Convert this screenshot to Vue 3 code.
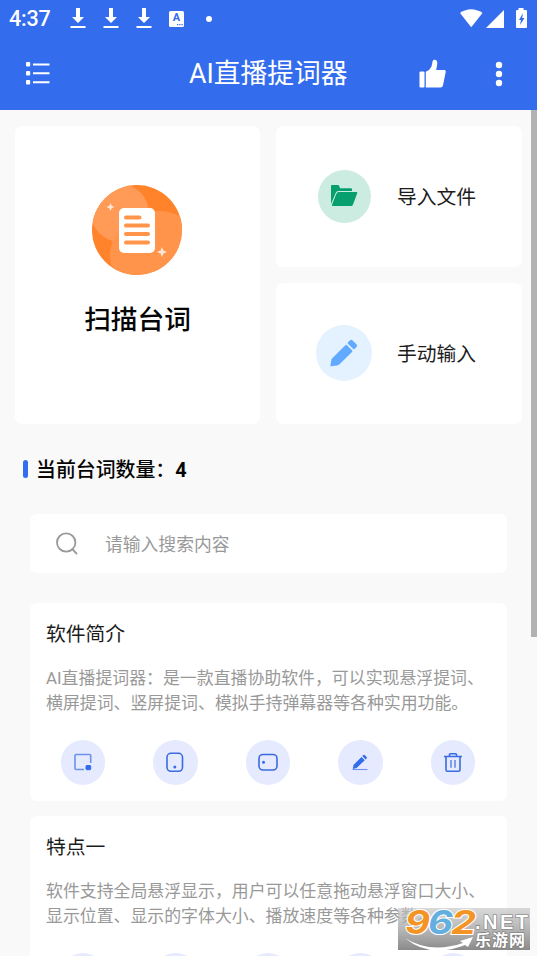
<script setup>
const scripts = [
  {
    title: '软件简介',
    lines: ['AI直播提词器：是一款直播协助软件，可以实现悬浮提词、', '横屏提词、竖屏提词、模拟手持弹幕器等各种实用功能。'],
  },
  {
    title: '特点一',
    lines: ['软件支持全局悬浮显示，用户可以任意拖动悬浮窗口大小、', '显示位置、显示的字体大小、播放速度等各种参数。'],
  },
]
const actions = ['float', 'portrait', 'landscape', 'edit', 'delete']
</script>

<template>
  <div class="screen">
    <header class="top">
      <div class="status">
        <span class="clock">4:37</span>
        <svg v-for="n in 3" :key="n" class="download" width="16" height="22" viewBox="0 0 16 22" fill="#fff">
          <path d="M6 0h4v9h4l-6 6-6-6h4zM.5 18h15v2H.5z" />
        </svg>
        <span class="badge"><span>A</span><svg width="6" height="2" viewBox="0 0 6 2" fill="#346cee"><path d="M0 0h1.300v1.300H0zM2.200 0h1.300v1.300H2.200zM4.400 0h1.300v1.300H4.400z" /></svg></span>
        <i class="dot"></i>
        <svg class="signals" width="69" height="22" viewBox="0 0 69 22" fill="#fff">
          <path d="M0 5Q11 -2.500 22.500 5L11.200 19.200z" />
          <path d="M44 2v18H26z" />
          <path fill-rule="evenodd" d="M58.500 0h5v2H66q1 0 1 1v16q0 1-1 1h-9q-1 0-1-1V3q0-1 1-1h1.500zM63 5l-4 7h2l-1 5 4.500-7h-2.300z" />
        </svg>
      </div>
      <div class="bar">
        <svg class="menu" width="24" height="24" viewBox="0 0 24 24" fill="#fff">
          <rect x="0" y="0" width="4.200" height="4.500" rx="1" /><rect x="0" y="9" width="4.200" height="4.500" rx="1" /><rect x="0" y="18" width="4.200" height="4.500" rx="1" />
          <path d="M7 1.500h16.500v2H7zM7 10.300h16.500v2H7zM7 19.200h16.500v2H7z" />
        </svg>
        <h1>AI直播提词器</h1>
        <svg class="thumb" width="28" height="30" viewBox="0 0 28 30" fill="#fff">
          <rect x="0.500" y="12.500" width="5" height="16" rx="1" />
          <path d="M6.800 12.800Q11 11 12.500 7.500L13.700 2Q14 .7 15.500.8q3 .2 2.800 4L17.200 11h8.300q1.500 0 1.300 1.600L24 26.300q-.4 2.200-2.500 2.200H6.800z" />
        </svg>
        <svg class="more" width="8" height="26" viewBox="0 0 8 26" fill="#fff"><circle cx="4" cy="4" r="3.200" /><circle cx="4" cy="13" r="3.200" /><circle cx="4" cy="22" r="3.200" /></svg>
      </div>
    </header>

    <section class="tools">
      <div class="card scan">
        <svg width="90" height="90" viewBox="0 0 90 90">
          <defs><clipPath id="disc"><circle cx="45" cy="45" r="45" /></clipPath></defs>
          <g clip-path="url(#disc)">
            <rect width="90" height="90" fill="#ff832b" />
            <circle cx="28" cy="28" r="29" fill="#ff9b57" />
            <ellipse cx="66" cy="71" rx="48" ry="45" fill="#ff944a" />
            <path d="M28 57Q19 50 22 42Q29 36 36 32V57z" fill="#ff9b57" opacity=".25" />
          </g>
          <rect x="27" y="23" width="36" height="45" rx="5" fill="#fff" />
          <path d="M34 32.500h13.500M34 40.500h22M34 49h22M34 57.500h22" stroke="#ff944a" stroke-width="4" stroke-linecap="round" />
          <path d="M18.500 18l1.200 2.700 2.800 1.300-2.800 1.200-1.200 2.800-1.200-2.800L14.500 22l2.800-1.300zM70 62l1.500 3.500L75 67l-3.500 1.500L70 72l-1.500-3.500L65 67l3.500-1.500z" fill="#ffe5d5" />
        </svg>
        <strong>扫描台词</strong>
      </div>
      <div class="side">
        <div class="card option">
          <span class="disc green">
            <svg width="28" height="24" viewBox="0 0 28 24" fill="#079f6d">
              <path d="M1 2Q1 1 2 1h6q1 0 1.200 1L10 4.200h11q1 0 1 1V7H8.500Q6.500 7 5.800 8.800L1 20z" />
              <path d="M8.800 8H26.500q1.100 0 .7 1.200L23 20.500Q22.500 22 21 22H2.800q-1.200 0-.8-1.200L6.300 10Q7 8 8.800 8z" />
            </svg>
          </span>
          <span>导入文件</span>
        </div>
        <div class="card option">
          <span class="disc blue">
            <svg width="30" height="30" viewBox="0 0 30 30" fill="#62aaff">
              <path d="M16.300 7.200Q17.200 6.300 18.100 7.200L23 12.200q.8.900 0 1.700L11.300 25.500Q10.300 27.200 8 27.500L1.800 28.300Q1.300 28.300 1.400 27.700L2.500 21Z" />
              <path d="M19 4.200L21 2.200Q22.300 1.300 23.600 2.500L27.700 6.500Q28.500 7.800 27.500 9L25.500 10.900Q24.800 11.500 24 10.800L19 5.700Q18.300 5 19 4.200z" />
            </svg>
          </span>
          <span>手动输入</span>
        </div>
      </div>
    </section>

    <h2><i></i><span>当前台词数量：<b>4</b></span></h2>

    <div class="search">
      <svg width="24" height="24" viewBox="0 0 24 24" fill="none" stroke="#999" stroke-width="1.800" stroke-linecap="round"><circle cx="10.200" cy="10.500" r="9.200" /><path d="M16.800 17.700l3.700 3.800" /></svg>
      <span>请输入搜索内容</span>
    </div>

    <section class="list">
      <article v-for="item in scripts" :key="item.title" class="item">
        <h3>{{ item.title }}</h3>
        <p><span v-for="line in item.lines" :key="line">{{ line }}</span></p>
        <div class="actions">
          <span v-for="action in actions" :key="action" class="action">
            <svg width="22" height="22" viewBox="0 0 22 22" fill="none" stroke="#3b6be0" stroke-width="1.600">
              <template v-if="action === 'float'">
                <path d="M18.700 12V4.500q0-1-1-1H4Q3 3.500 3 4.500v13q0 1 1 1h8" stroke="#6e91ee" /><rect x="14" y="14.500" width="4.700" height="4.200" rx=".7" fill="#346cee" stroke="#346cee" stroke-width="1" />
              </template>
              <template v-else-if="action === 'portrait'">
                <rect x="3" y="2.300" width="15.500" height="18" rx="4" /><circle cx="10.800" cy="16" r="1.500" fill="#346cee" stroke="none" />
              </template>
              <template v-else-if="action === 'landscape'">
                <rect x="2" y="3.500" width="18" height="15.500" rx="4" /><circle cx="6.500" cy="11.200" r="1.500" fill="#346cee" stroke="none" />
              </template>
              <template v-else-if="action === 'edit'">
                <path d="M3.800 17.900l.7-4L12.500 5.900l3.300 3.300-8.200 7.800zM13.300 5.100l1-1q.7-.7 1.400 0l1.900 1.900q.7.700 0 1.400l-1 1z" fill="#346cee" stroke="none" /><path d="M3.500 18.500h15" stroke="#6e91ee" stroke-width="1.100" />
              </template>
              <template v-else>
                <path d="M2 5.500h18M7.500 5.300V3.500q0-.8.8-.8h5.400q.8 0 .8.8v1.800M4 6v12.800q0 1.400 1.400 1.400h11.200q1.400 0 1.400-1.400V6" /><path d="M9 9v7.800M13 9v7.800" stroke-width="1.200" />
              </template>
            </svg>
          </span>
        </div>
      </article>
    </section>

    <div class="scrollbar"></div>
    <div class="watermark">
      <svg width="132" height="43" viewBox="0 0 132 43">
        <defs><linearGradient id="shade" x2="0" y2="1"><stop stop-color="#c5c5c5" stop-opacity=".65" /><stop offset="1" stop-color="#858585" stop-opacity=".96" /></linearGradient></defs>
        <rect width="132" height="42" fill="url(#shade)" />
        <g class="digits" stroke="#fff" stroke-width="2" paint-order="stroke">
          <text x="7" y="26" textLength="25" lengthAdjust="spacingAndGlyphs" fill="#f49425">9</text>
          <text x="30" y="26" textLength="25" lengthAdjust="spacingAndGlyphs" fill="#62afe0">6</text>
          <text x="53" y="26" textLength="25" lengthAdjust="spacingAndGlyphs" fill="#f49425">2</text>
        </g>
        <path d="M7 30Q32 46 65 35l-3-2 13-4-5 10-3-2Q32 51 7 30z" fill="#fff" />
        <g stroke="#777" stroke-width="1.200" paint-order="stroke" fill="#fff">
          <text class="net" x="77" y="21" textLength="53">.NET</text>
          <text class="site" x="77" y="38" textLength="50">乐游网</text>
        </g>
      </svg>
    </div>
  </div>
</template>

<style>
body { margin: 0; }
</style>

<style scoped>
* { box-sizing: border-box; }
.screen { position: relative; height: 956px; overflow: hidden; background: #f9f9f9; color: #1c1c1c; font-family: Roboto, "Noto Sans CJK SC", sans-serif; }
svg { display: block; flex: none; }
h1, h2, h3, p { margin: 0; font-weight: 400; }
.top { height: 110px; background: #346cee; color: #fff; }
.status { height: 37px; display: flex; align-items: center; padding: 0 9px; }
.clock { width: 61px; font-size: 21.500px; font-weight: 500; line-height: 37px; letter-spacing: -.2px; }
.download { margin-right: 17px; }
.badge { width: 15px; height: 16px; border-radius: 1.500px; background: #fff; color: #346cee; display: flex; flex-direction: column; align-items: center; font: 700 11px/13px Roboto, sans-serif; }
.badge svg { align-self: flex-end; margin-right: 1px; }
.dot { width: 6px; height: 6px; margin-left: 22px; border-radius: 50%; background: #fff; }
.signals { margin-left: auto; margin-right: -1px; }
.bar { height: 73px; display: flex; align-items: center; padding: 0 34px 0 26px; }
.menu { margin-right: 139px; margin-top: 1px; }
h1 { width: 230px; padding-top: 1px; font-size: 26.750px; line-height: 40px; white-space: nowrap; }
.more { margin-left: auto; }
.tools { display: flex; gap: 16px; padding: 16px 15px 0; height: 314px; }
.card { background: #fff; border-radius: 7px; }
.scan { width: 245px; display: flex; flex-direction: column; align-items: center; padding-top: 59px; }
.scan svg { margin-right: 1px; }
.scan strong { margin-top: 25px; color: #050505; font-size: 26.700px; line-height: 40px; font-weight: 500; }
.side { width: 246px; display: grid; grid-template-rows: 140.500px 141.500px; gap: 16px; }
.option { display: flex; align-items: center; padding-left: 40px; gap: 25px; font-size: 19.800px; line-height: 30px; }
.option > span:last-child { padding-top: 3px; }
.disc { display: flex; align-items: center; justify-content: center; width: 56px; height: 56px; border-radius: 50%; }
.green { width: 53px; height: 53px; margin: 0 1.500px; background: #cdece1; }
.blue { background: #e4f1ff; }
h2 { display: flex; align-items: center; gap: 8px; height: 90px; padding-left: 23px; color: #050505; font-size: 19.900px; font-weight: 500; }
h2 i { width: 5px; height: 18px; border-radius: 2.500px; background: #346cee; }
h2 span { margin-top: -2px; }
h2 b { font-weight: 700; }
.search { display: flex; align-items: center; gap: 25px; width: 477px; height: 59px; margin-left: 30px; padding-left: 26px; border-radius: 7px; background: #fff; color: #999; font-size: 17.800px; }
.search span { margin-top: -2px; }
.list { display: grid; gap: 15px; margin: 30px 30px 0; }
.item { height: 197.500px; padding: 17px 16px 0; border-radius: 7px; background: #fff; }
h3 { height: 30px; font-size: 19.800px; line-height: 30px; }
p { display: flex; flex-direction: column; margin-top: 16px; color: #999; font-size: 16.900px; line-height: 25px; white-space: nowrap; }
p span { height: 25px; }
.actions { display: flex; justify-content: space-between; margin: 24px 16px 0 14.500px; }
.action { width: 44.500px; height: 44.500px; display: flex; align-items: center; justify-content: center; border-radius: 50%; background: #e5eaff; }
.scrollbar { position: absolute; right: 0; top: 110px; width: 6px; height: 527px; background: #b2b2b2; }
.watermark { position: absolute; left: 398px; top: 908px; }
.watermark svg { overflow: visible; }
.digits { font: italic 700 33px Inter, sans-serif; }
.net { font: 700 20px "Liberation Sans", sans-serif; }
.site { font: 700 16px "Noto Sans CJK SC", sans-serif; }
</style>
